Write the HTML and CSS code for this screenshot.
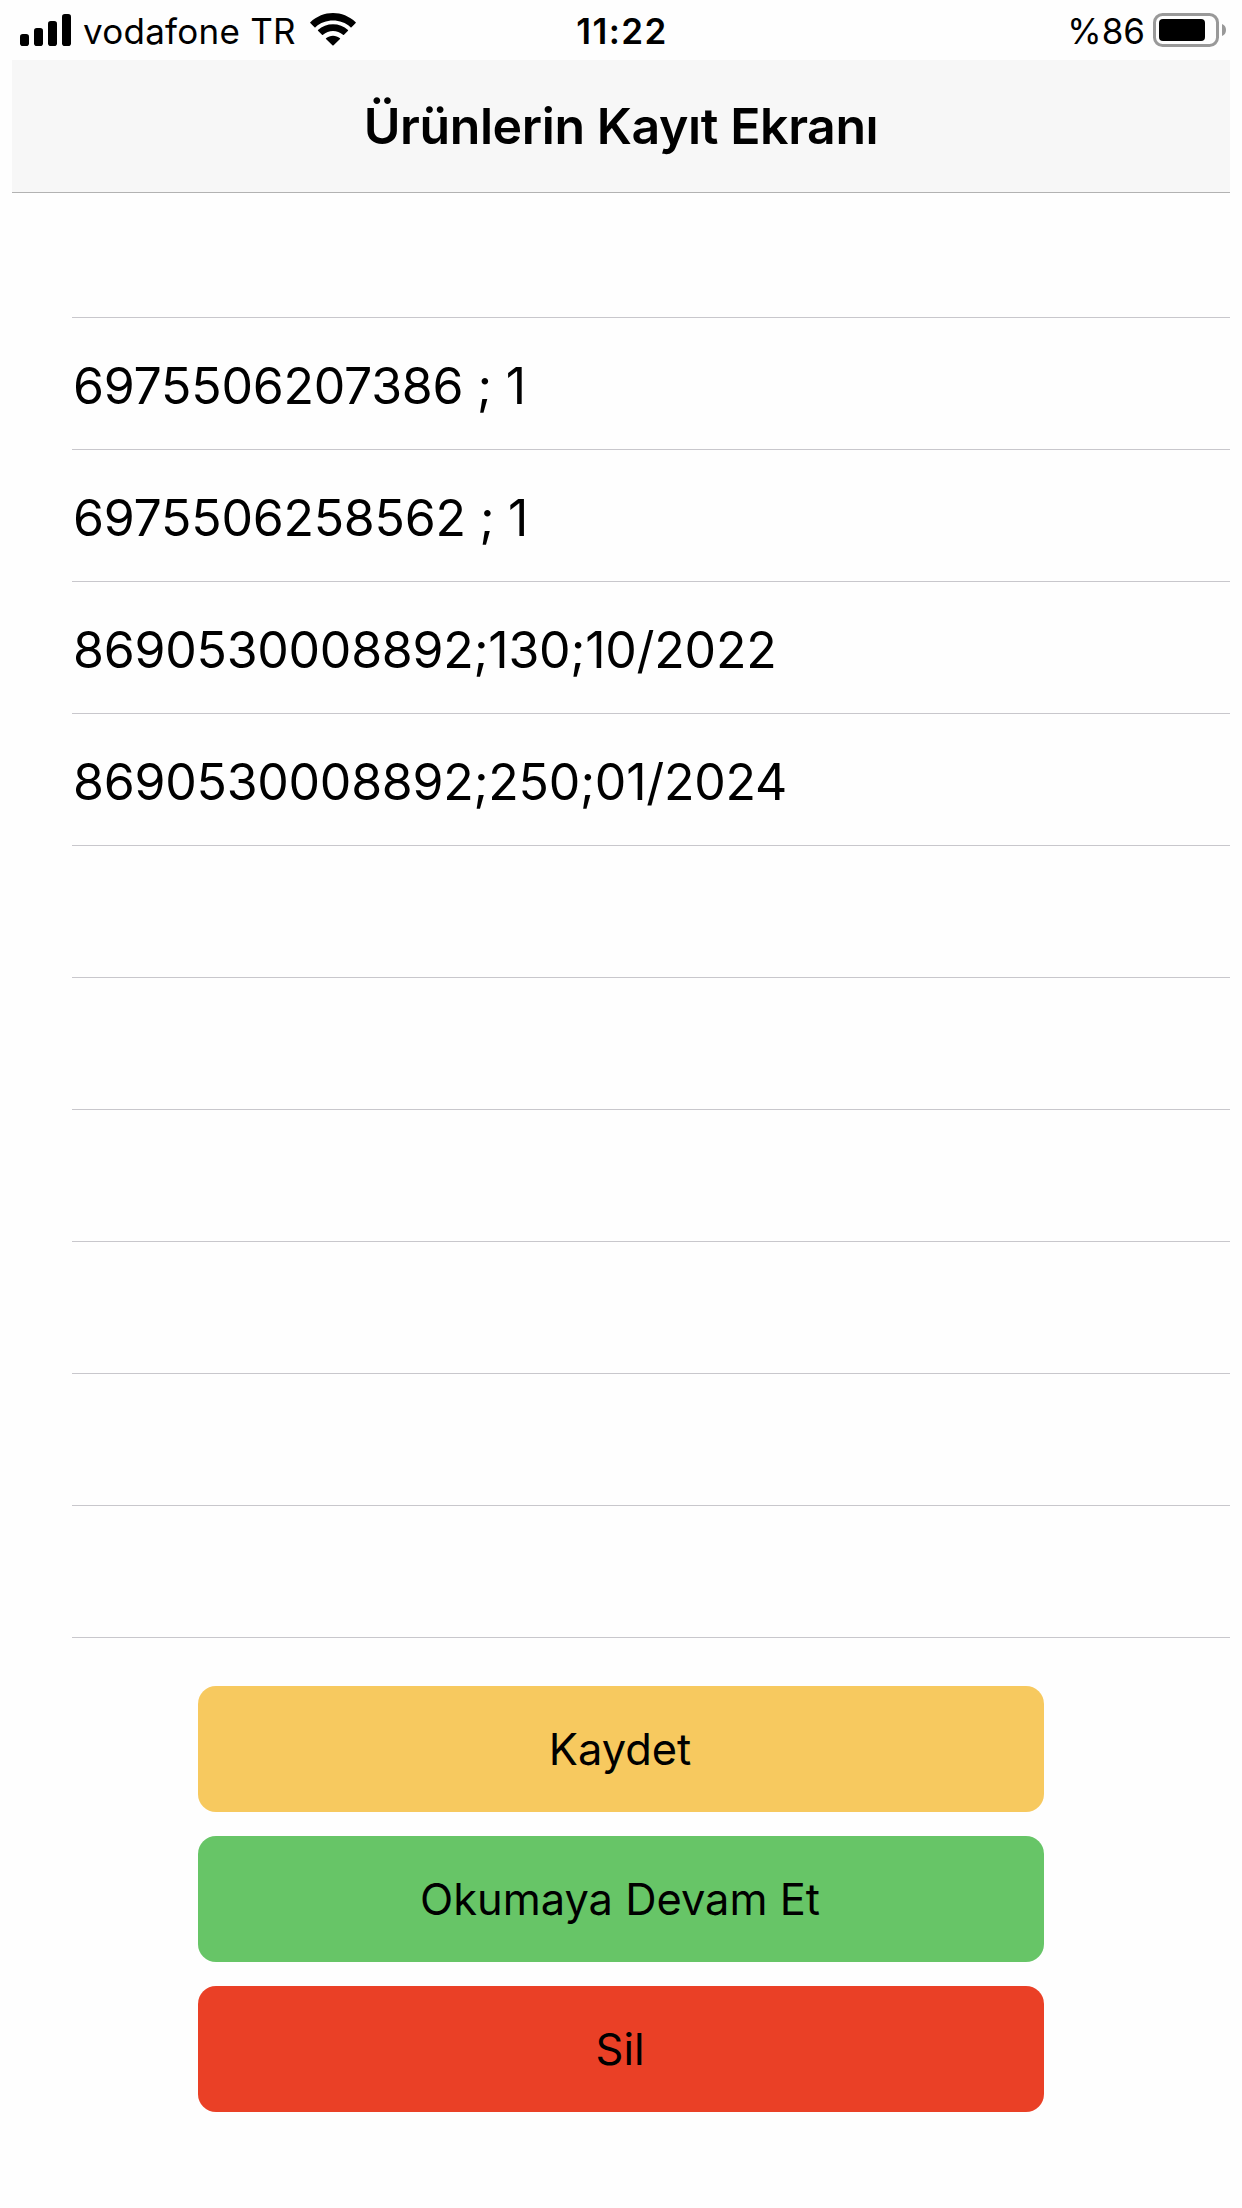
FILE: index.html
```
<!DOCTYPE html>
<html lang="tr">

<head>
  <meta charset="UTF-8">
  <meta name="viewport" content="width=device-width, initial-scale=1.0">
  <title>Ürünlerin Kayıt Ekranı</title>
  <link rel="stylesheet" href="styles.css">
</head>

<body>
  <div class="status-bar">
    <div class="status-left">
      <svg class="signal" width="52" height="32" viewBox="0 0 52 32">
        <rect x="0" y="20" width="9" height="12" rx="2.8" />
        <rect x="14" y="14" width="9" height="18" rx="2.8" />
        <rect x="28" y="7" width="9" height="25" rx="2.8" />
        <rect x="42" y="0" width="9" height="32" rx="2.8" />
      </svg>
      <span class="carrier">vodafone TR</span>
      <svg class="wifi" width="46" height="33" viewBox="0 0 46 33">
        <path d="M0.3 9.3 C13 -3.1 33 -3.1 45.7 9.3 Q46 9.7 45.7 10.1 L41.5 14.2 Q41 14.6 40.5 14.2 C31 5.4 15 5.4 5.5 14.2 Q5 14.6 4.5 14.2 L0.3 10.1 Q0 9.7 0.3 9.3 Z" />
        <path d="M8 17 C16 9.2 30 9.2 38 17 Q38.3 17.4 38 17.8 L34 21.8 Q33.5 22.2 33 21.8 C27.5 16.6 18.5 16.6 13 21.8 Q12.5 22.2 12 21.8 L8 17.8 Q7.7 17.4 8 17 Z" />
        <path d="M16 25.2 C20 21.8 26 21.8 30 25.2 Q30.4 25.6 30 26.1 L23.6 32.3 Q23 32.9 22.4 32.3 L16 26.1 Q15.6 25.6 16 25.2 Z" />
      </svg>
    </div>
    <span class="clock">11:22</span>
    <div class="status-right">
      <span class="percent">%86</span>
      <svg class="battery" width="74" height="34" viewBox="0 0 74 34">
        <rect x="1.5" y="1.5" width="63" height="31" rx="8" fill="none" stroke="#999" stroke-width="3" />
        <rect x="6" y="6" width="46" height="22" rx="4" />
        <path d="M69 11 Q73 12.5 73 17 Q73 21.5 69 23 Z" fill="#999" />
      </svg>
    </div>
  </div>

  <div class="screen">
    <header class="navbar">
      <h1>Ürünlerin Kayıt Ekranı</h1>
    </header>

    <ul class="list">
      <li class="first"></li>
      <li>6975506207386 ; 1</li>
      <li>6975506258562 ; 1</li>
      <li>8690530008892;130;10/2022</li>
      <li>8690530008892;250;01/2024</li>
      <li></li>
      <li></li>
      <li></li>
      <li></li>
      <li></li>
      <li></li>
    </ul>

    <div class="buttons">
      <button class="kaydet">Kaydet</button>
      <button class="devam">Okumaya Devam Et</button>
      <button class="sil">Sil</button>
    </div>
  </div>
</body>

</html>
```
FILE: styles.css
```
* {
  box-sizing: border-box;
}

body {
  font-family: Inter, "Liberation Sans", sans-serif;
  background-color: #fefefe;
  color: #000;
  margin: 0;
}

.status-bar {
  display: grid;
  grid-template-columns: 1fr auto 1fr;
  height: 60px;
  padding: 0 15px 0 20px;
  font-size: 35px;
  line-height: 62px;
}

.status-left,
.status-right {
  display: flex;
  align-items: flex-start;
}

.status-right {
  justify-content: flex-end;
}

.signal {
  margin-top: 14px;
}

.carrier {
  margin-left: 11px;
  letter-spacing: 0.25px;
}

.wifi {
  margin: 13px 0 0 14px;
}

.clock {
  font-weight: 600;
  letter-spacing: 1.4px;
  margin-left: -3px;
}

.battery {
  margin: 13px 0 0 8px;
}

.screen {
  margin: 0 12px;
}

.navbar {
  height: 133px;
  background-color: #f7f7f7;
  border-bottom: 1px solid #b2b2b2;
  text-align: center;
}

.navbar h1 {
  margin: 0;
  font-size: 50px;
  font-weight: 600;
  letter-spacing: -0.4px;
  line-height: 132px;
}

.list {
  list-style: none;
  margin: 0 0 0 60px;
  padding: 0;
}

.list li {
  height: 132px;
  padding-left: 1px;
  border-bottom: 1px solid #c8c7cc;
  font-size: 50px;
  letter-spacing: -0.25px;
  line-height: 136px;
}

.list .first {
  height: 125px;
}

.buttons {
  display: flex;
  flex-direction: column;
  gap: 24px;
  margin: 48px 186px 0;
}

button {
  height: 126px;
  padding: 0 2px 0 0;
  border: none;
  border-radius: 18px;
  font-family: inherit;
  font-size: 43.4px;
  color: #000;
}

.kaydet {
  background-color: #f7c95f;
}

.devam {
  background-color: #67c567;
}

.sil {
  background-color: #ea4026;
}
```
